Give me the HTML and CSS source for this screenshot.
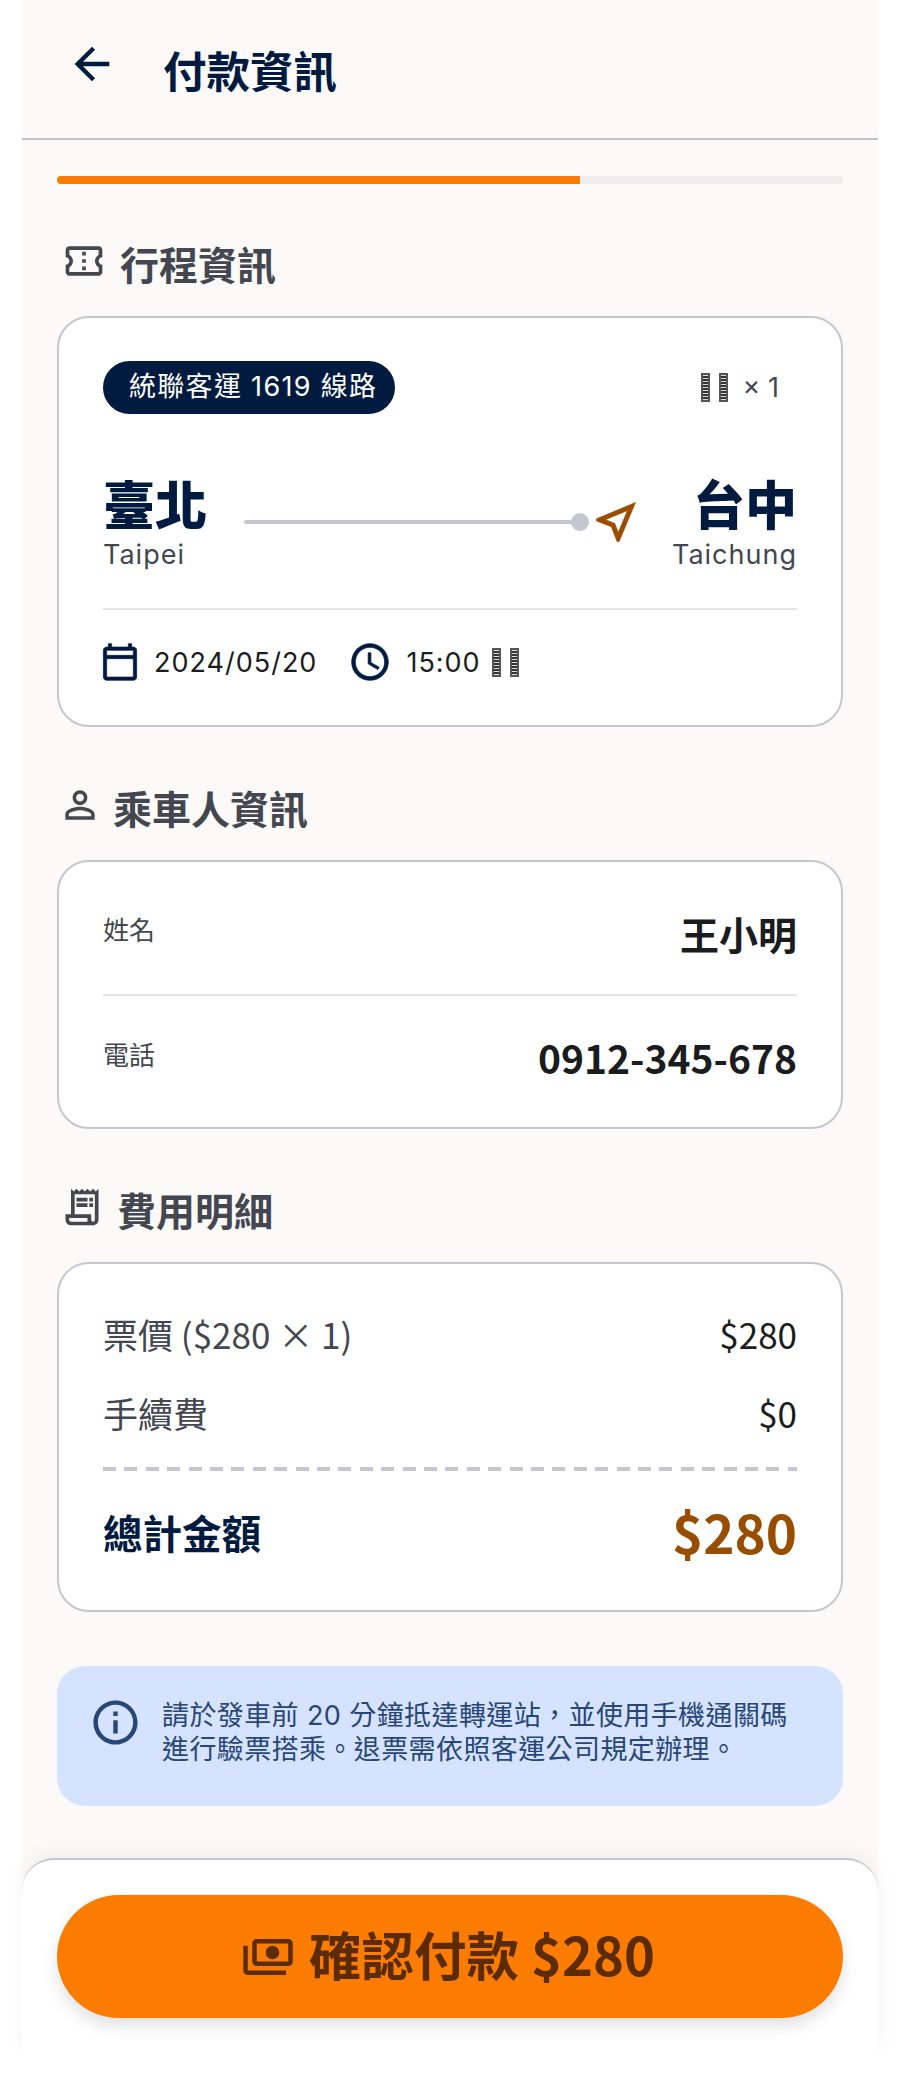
FILE: index.html
```html
<!DOCTYPE html>
<html lang="zh-TW">
  <head>
    <meta charset="UTF-8" />
    <meta name="viewport" content="width=device-width, initial-scale=1.0" />
    <link rel="stylesheet" href="styles.css">
    <title>付款資訊</title>
  </head>
  <body>
    <div class="phone">
      <header class="top-bar">
        <svg class="back-icon" viewBox="0 0 24 24"><path d="M20 11H7.83l5.59-5.59L12 4l-8 8 8 8 1.41-1.41L7.83 13H20v-2z"/></svg>
        <h1 class="page-title">付款資訊</h1>
      </header>

      <main class="content">
        <div class="progress"><div class="progress-fill"></div></div>

        <h2 class="section-title trip-title">
          <svg class="section-icon" viewBox="0 0 24 24"><path d="M22 10V6c0-1.11-.9-2-2-2H4c-1.1 0-1.99.89-1.99 2v4c1.1 0 1.99.9 1.99 2s-.89 2-2 2v4c0 1.1.9 2 2 2h16c1.1 0 2-.9 2-2v-4c-1.1 0-2-.9-2-2s.9-2 2-2zm-2-1.46c-1.19.69-2 1.99-2 3.46s.81 2.77 2 3.46V18H4v-2.54c1.19-.69 2-1.99 2-3.46 0-1.48-.8-2.77-1.99-3.46L4 6h16v2.54zM11 15h2v2h-2zm0-4h2v2h-2zm0-4h2v2h-2z"/></svg>
          行程資訊
        </h2>
        <section class="card trip-card">
          <div class="trip-top">
            <span class="route-pill">統聯客運 1619 線路</span>
            <span class="seat-count"><i class="tofu"></i><i class="tofu"></i><span class="times">× 1</span></span>
          </div>
          <div class="route">
            <div class="city">
              <div class="city-name">臺北</div>
              <div class="city-en">Taipei</div>
            </div>
            <div class="route-line"></div>
            <svg class="nav-icon" viewBox="0 0 24 24"><path d="M17.27 6.73l-4.24 10.13-1.32-3.42-.32-.83-.82-.32-3.43-1.33 10.13-4.23M21 3L3 10.53v.98l6.84 2.65L12.48 21h.98L21 3z"/></svg>
            <div class="city city-end">
              <div class="city-name">台中</div>
              <div class="city-en">Taichung</div>
            </div>
          </div>
          <div class="trip-meta">
            <svg class="meta-icon" viewBox="0 0 24 24"><path d="M20 3h-1V1h-2v2H7V1H5v2H4c-1.1 0-2 .9-2 2v16c0 1.1.9 2 2 2h16c1.1 0 2-.9 2-2V5c0-1.1-.9-2-2-2zm0 18H4V10h16v11zm0-13H4V5h16v3z"/></svg>
            <span class="meta-text">2024/05/20</span>
            <svg class="meta-icon clock-icon" viewBox="0 0 24 24"><path d="M11.99 2C6.47 2 2 6.48 2 12s4.47 10 9.99 10C17.52 22 22 17.52 22 12S17.52 2 11.99 2zM12 20c-4.42 0-8-3.58-8-8s3.58-8 8-8 8 3.58 8 8-3.58 8-8 8zm.5-13H11v6l5.25 3.15.75-1.23-4.5-2.67z"/></svg>
            <span class="meta-text">15:00</span>
            <span class="meta-tofu"><i class="tofu"></i><i class="tofu"></i></span>
          </div>
        </section>

        <h2 class="section-title person-title">
          <svg class="section-icon" viewBox="0 0 24 24"><path d="M12 5.9c1.16 0 2.1.94 2.1 2.1s-.94 2.1-2.1 2.1S9.9 9.16 9.9 8s.94-2.1 2.1-2.1m0 9c2.97 0 6.1 1.46 6.1 2.1v1.1H5.9V17c0-.64 3.13-2.1 6.1-2.1M12 4C9.79 4 8 5.79 8 8s1.79 4 4 4 4-1.79 4-4-1.79-4-4-4zm0 9c-2.67 0-8 1.34-8 4v3h16v-3c0-2.66-5.33-4-8-4z"/></svg>
          乘車人資訊
        </h2>
        <section class="card person-card">
          <div class="person-row">
            <span class="person-label">姓名</span>
            <span class="person-value">王小明</span>
          </div>
          <div class="person-row">
            <span class="person-label">電話</span>
            <span class="person-value">0912-345-678</span>
          </div>
        </section>

        <h2 class="section-title fee-title">
          <svg class="section-icon" viewBox="0 0 24 24"><path d="M19.5 3.5 18 2l-1.5 1.5L15 2l-1.5 1.5L12 2l-1.5 1.5L9 2 7.5 3.5 6 2v14H3v3c0 1.66 1.34 3 3 3h12c1.66 0 3-1.34 3-3V2l-1.5 1.5zM15 20H6c-.55 0-1-.45-1-1v-1h10v2zm4-1c0 .55-.45 1-1 1s-1-.45-1-1v-3H8V5h11v14z"/><path d="M9 7h6v2H9zM16 7h2v2h-2zM9 10h6v2H9zM16 10h2v2h-2z"/></svg>
          費用明細
        </h2>
        <section class="card fee-card">
          <div class="fee-row">
            <span>票價 ($280 × 1)</span>
            <span>$280</span>
          </div>
          <div class="fee-row">
            <span>手續費</span>
            <span>$0</span>
          </div>
          <div class="fee-total">
            <span class="total-label">總計金額</span>
            <span class="total-value">$280</span>
          </div>
        </section>

        <section class="notice">
          <svg class="notice-icon" viewBox="0 0 24 24"><path d="M11 7h2v2h-2zm0 4h2v6h-2zm1-9C6.48 2 2 6.48 2 12s4.48 10 10 10 10-4.48 10-10S17.52 2 12 2zm0 18c-4.41 0-8-3.59-8-8s3.59-8 8-8 8 3.59 8 8-3.59 8-8 8z"/></svg>
          <p class="notice-text">請於發車前 20 分鐘抵達轉運站，並使用手機通關碼<br>進行驗票搭乘。退票需依照客運公司規定辦理。</p>
        </section>
      </main>

      <footer class="bottom-bar">
        <button class="pay-btn">
          <svg class="pay-icon" viewBox="0 0 24 24"><path d="M19 14V6c0-1.1-.9-2-2-2H3c-1.1 0-2 .9-2 2v8c0 1.1.9 2 2 2h14c1.1 0 2-.9 2-2zm-2 0H3V6h14v8zm-7-7c-1.66 0-3 1.34-3 3s1.34 3 3 3 3-1.34 3-3-1.34-3-3-3zm13 0v11c0 1.1-.9 2-2 2H4v-2h17V7h2z"/></svg>
          <span class="pay-text">確認付款 $280</span>
        </button>
      </footer>
    </div>
  </body>
</html>
```

FILE: styles.css
```css
html,
body {
  margin: 0;
  padding: 0;
  background: #fff;
}

body {
  font-family: "Noto Sans CJK TC", sans-serif;
  color: #1a1c1e;
}

.phone {
  width: 856px;
  margin: 0 22px;
  background: #fbfaf8;
}

.top-bar {
  display: flex;
  align-items: center;
  height: 138px;
  padding-left: 44px;
  border-bottom: 2px solid #c2c3cb;
}

.back-icon {
  width: 52px;
  height: 52px;
  fill: #001b3f;
  margin-top: -10px;
}

.page-title {
  margin: 0 0 0 45px;
  font-size: 43.5px;
  font-weight: 700;
  color: #001b3f;
}

.content {
  padding: 36px 35px 52px;
}

.progress {
  height: 8px;
  background: #efeded;
  border-radius: 4px;
  overflow: hidden;
}

.progress-fill {
  width: 66.6%;
  height: 100%;
  background: #fb7c00;
}

.section-title {
  display: flex;
  align-items: center;
  margin: 51px 0 24px;
  font-size: 39px;
  line-height: 58px;
  font-weight: 700;
  color: #44474f;
}

.trip-title {
  margin-top: 50px;
  margin-bottom: 24px;
  gap: 14px;
}

.person-title {
  gap: 11px;
}

.fee-title {
  gap: 13px;
}

.section-icon {
  width: 44px;
  height: 44px;
  fill: #44474f;
  margin-top: -4px;
}

.trip-title .section-icon {
  margin-left: 5px;
}

.person-title .section-icon {
  margin-left: 1px;
}

.fee-title .section-icon {
  margin-left: 3px;
}

.card {
  background: #fff;
  border: 2px solid #c5c6d0;
  border-radius: 32px;
  padding: 0 44px;
}

.trip-card {
  padding-top: 43px;
  box-sizing: border-box;
  height: 411px;
}

.trip-top {
  display: flex;
  align-items: center;
  justify-content: space-between;
}

.route-pill {
  height: 53px;
  line-height: 51px;
  padding: 0 18px 0 26px;
  border-radius: 27px;
  background: #001b3f;
  color: #fff;
  font-family: Inter, "Noto Sans CJK TC", sans-serif;
  font-size: 27px;
  letter-spacing: 1.3px;
  white-space: nowrap;
}

.seat-count {
  display: flex;
  align-items: center;
  padding-right: 18px;
}

.tofu {
  display: inline-block;
  width: 9px;
  height: 29px;
  background:
    repeating-linear-gradient(0deg, #ddd 0 1px, #333 1px 3px) center / 5px 25px no-repeat,
    #555;
  margin-right: 9px;
}

.times {
  margin-left: 6px;
  font-family: Inter, sans-serif;
  font-size: 27px;
  color: #44474f;
}

.route {
  display: flex;
  align-items: center;
  margin-top: 58px;
  padding-bottom: 37px;
  border-bottom: 2px solid #e4e2e2;
}

.city-name {
  font-size: 52px;
  line-height: 62px;
  font-weight: 900;
  color: #001b3f;
}

.city-en {
  margin-top: 5px;
  font-family: Inter, sans-serif;
  font-size: 27px;
  line-height: 32px;
  letter-spacing: 1px;
  color: #44474f;
}

.city-end {
  text-align: right;
}

.route-line {
  position: relative;
  flex: 1;
  height: 4px;
  margin: 0 0 0 37px;
  background: #c5c6d0;
  border-radius: 2px;
}

.route-line::after {
  content: "";
  position: absolute;
  right: -9px;
  top: -7px;
  width: 18px;
  height: 18px;
  border-radius: 50%;
  background: #c5c6d0;
}

.nav-icon {
  width: 52px;
  height: 52px;
  margin: 0 30px 0 10px;
  fill: #994d00;
  stroke: #994d00;
  stroke-width: 0.3;
}

.trip-meta {
  display: flex;
  align-items: center;
  margin-top: 30px;
}

.meta-icon {
  width: 40px;
  height: 40px;
  fill: #001b3f;
  stroke: #001b3f;
  stroke-width: 0.4;
  margin-left: -3px;
}

.clock-icon {
  width: 44px;
  height: 44px;
  margin: 0 0 0 31px;
}

.meta-text {
  margin-left: 14px;
  font-family: Inter, sans-serif;
  font-size: 27px;
  letter-spacing: 1px;
}

.meta-tofu {
  display: flex;
  margin-left: 11px;
}

.person-card {
  padding-top: 12px;
  padding-bottom: 9px;
}

.person-row {
  display: flex;
  justify-content: space-between;
  align-items: center;
  height: 122px;
  box-sizing: border-box;
}

.person-row:first-child {
  padding-bottom: 3px;
  border-bottom: 2px solid #e4e2e2;
}

.person-label {
  font-size: 26px;
  color: #44474f;
  margin-bottom: 8px;
}

.person-value {
  font-size: 39px;
  font-weight: 700;
  color: #1a1c1e;
}

.fee-card {
  padding-top: 44px;
  padding-bottom: 41px;
}

.fee-row {
  display: flex;
  justify-content: space-between;
  align-items: center;
  height: 50px;
  margin-bottom: 29px;
  font-size: 35px;
  color: #44474f;
}

.fee-row span:last-child {
  color: #1a1c1e;
}

.fee-total {
  display: flex;
  justify-content: space-between;
  align-items: center;
  margin-top: 30px;
  padding-top: 26px;
  background: repeating-linear-gradient(90deg, #c5c6d0 0 13px, transparent 13px 21.4px) top / 100% 4px no-repeat;
}

.total-label {
  font-size: 39.5px;
  font-weight: 700;
  color: #001b3f;
}

.total-value {
  font-size: 53px;
  font-weight: 700;
  color: #994d00;
}

.notice {
  display: flex;
  align-items: flex-start;
  gap: 21px;
  margin-top: 54px;
  padding: 33px 36px 39px 32px;
  background: #d6e3ff;
  border-radius: 28px;
}

.notice-icon {
  flex: none;
  width: 53px;
  height: 53px;
  margin-top: -3px;
  fill: #284777;
}

.notice-text {
  margin: 0 0 0 -1px;
  font-family: Inter, "Noto Sans CJK TC", sans-serif;
  font-size: 27px;
  line-height: 34px;
  letter-spacing: 0.4px;
  white-space: nowrap;
  color: #284777;
}

.bottom-bar {
  height: 194px;
  padding: 35px 35px 0;
  box-sizing: border-box;
  background: #fff;
  border-top: 2px solid #c5c6d0;
  border-radius: 32px 32px 0 0;
  box-shadow: 0 -4px 20px rgba(0, 0, 0, 0.05);
}

.pay-btn {
  display: flex;
  align-items: center;
  justify-content: center;
  gap: 14px;
  width: 100%;
  height: 123px;
  padding: 0 4px 0 0;
  border: 0;
  border-radius: 62px;
  background: #fb7c00;
  color: #5c2b00;
  font-family: "Noto Sans CJK TC", sans-serif;
  font-size: 52.5px;
  font-weight: 700;
  box-shadow: 0 8px 16px rgba(0, 0, 0, 0.12);
}

.pay-text {
  margin-bottom: 8px;
}

.pay-icon {
  width: 54px;
  height: 54px;
  fill: #5c2b00;
  transform: scaleX(-1);
}
```
